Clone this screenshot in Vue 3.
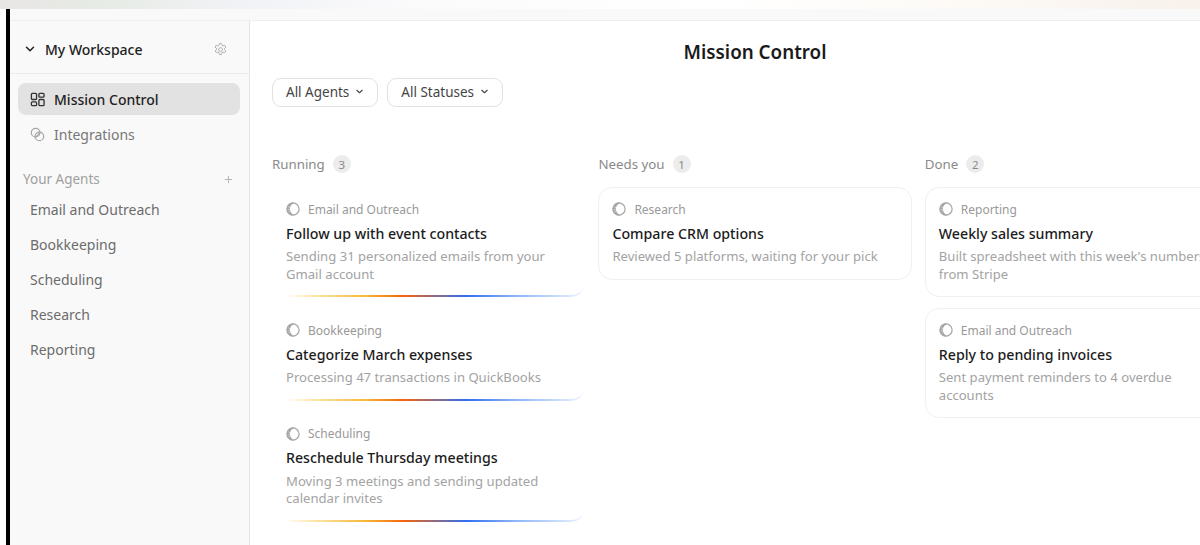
<script setup>
const agents = ['Email and Outreach', 'Bookkeeping', 'Scheduling', 'Research', 'Reporting']

const columns = [
  {
    name: 'Running',
    running: true,
    cards: [
      { agent: 'Email and Outreach', title: 'Follow up with event contacts', desc: 'Sending 31 personalized emails from your Gmail account' },
      { agent: 'Bookkeeping', title: 'Categorize March expenses', desc: 'Processing 47 transactions in QuickBooks' },
      { agent: 'Scheduling', title: 'Reschedule Thursday meetings', desc: 'Moving 3 meetings and sending updated calendar invites' },
    ],
  },
  {
    name: 'Needs you',
    running: false,
    cards: [
      { agent: 'Research', title: 'Compare CRM options', desc: 'Reviewed 5 platforms, waiting for your pick' },
    ],
  },
  {
    name: 'Done',
    running: false,
    cards: [
      { agent: 'Reporting', title: 'Weekly sales summary', desc: "Built spreadsheet with this week's numbers from Stripe" },
      { agent: 'Email and Outreach', title: 'Reply to pending invoices', desc: 'Sent payment reminders to 4 overdue accounts' },
    ],
  },
]
</script>

<template>
  <div class="page">
    <div class="top-strip"></div>
    <div class="window">
      <div class="titlebar"></div>
      <div class="app">
        <aside class="sidebar">
          <div class="workspace">
            <svg class="ws-chevron" viewBox="0 0 12 12" width="12" height="12">
              <path d="M2.5 4.2 6 7.8l3.5-3.6" fill="none" stroke="#222" stroke-width="1.5" stroke-linecap="round" stroke-linejoin="round" />
            </svg>
            <span class="ws-name">My Workspace</span>
            <svg class="ws-gear" viewBox="0 0 24 24" width="15" height="15" fill="none" stroke="#b0b0b0" stroke-width="1.6" stroke-linejoin="round">
              <path d="M10.3 2.5h3.4l.6 2.9 1.7.9 2.8-1 1.7 3-2.2 1.9v2l2.2 1.9-1.7 3-2.8-1-1.7.9-.6 2.9h-3.4l-.6-2.9-1.7-.9-2.8 1-1.7-3 2.2-1.9v-2L3.2 8.3l1.7-3 2.8 1 1.7-.9z" />
              <circle cx="12" cy="12" r="3" />
            </svg>
          </div>
          <nav class="nav">
            <div class="nav-item active">
              <svg viewBox="0 0 16 16" width="15" height="15" fill="none" stroke="#333" stroke-width="1.4">
                <rect x="1.5" y="1.5" width="5.5" height="6.5" rx="1" />
                <rect x="9.5" y="1.5" width="5.5" height="4" rx="1" />
                <rect x="1.5" y="10.5" width="5.5" height="4" rx="1" />
                <rect x="9.5" y="8" width="5.5" height="6.5" rx="1" />
              </svg>
              <span>Mission Control</span>
            </div>
            <div class="nav-item">
              <svg viewBox="0 0 16 16" width="15" height="15" fill="none" stroke="#a6a6a6" stroke-width="1.3">
                <circle cx="6" cy="6" r="4.6" />
                <circle cx="10" cy="10" r="4.6" />
                <path d="M6.5 10.5 10.5 6" />
              </svg>
              <span>Integrations</span>
            </div>
          </nav>
          <div class="agents-head">
            <span>Your Agents</span>
            <svg viewBox="0 0 10 10" width="9" height="9" stroke="#b5b5b5" stroke-width="1.1">
              <path d="M5 1v8M1 5h8" />
            </svg>
          </div>
          <div class="agent-row" v-for="a in agents" :key="a">{{ a }}</div>
        </aside>

        <main class="main">
          <h1 class="title">Mission Control</h1>
          <div class="filters">
            <button class="filter">
              All Agents
              <svg viewBox="0 0 10 10" width="9" height="9"><path d="M2 3.6 5 6.4l3-2.8" fill="none" stroke="#444" stroke-width="1.2" stroke-linecap="round" stroke-linejoin="round" /></svg>
            </button>
            <button class="filter">
              All Statuses
              <svg viewBox="0 0 10 10" width="9" height="9"><path d="M2 3.6 5 6.4l3-2.8" fill="none" stroke="#444" stroke-width="1.2" stroke-linecap="round" stroke-linejoin="round" /></svg>
            </button>
          </div>
          <div class="board">
            <section class="column" v-for="col in columns" :key="col.name">
              <div class="col-head">
                <span>{{ col.name }}</span>
                <span class="count">{{ col.cards.length }}</span>
              </div>
              <div class="card-list">
                <article class="card" :class="{ running: col.running }" v-for="c in col.cards" :key="c.title">
                  <div class="meta">
                    <svg viewBox="0 0 14 14" width="14" height="14" fill="none">
                      <circle cx="7" cy="7" r="6.1" stroke="#ababab" stroke-width="1.3" />
                      <path d="M9 .9A6.4 6.4 0 1 0 9 13.1 6 6 0 0 1 3.9 7 6 6 0 0 1 9 .9Z" fill="#a6a6a6" />
                      <path d="M2.2 4.6 4 5.8M1.7 7.4h2.2M2.4 10l1.8-1.2" stroke="#dedede" stroke-width=".7" />
                    </svg>
                    <span>{{ c.agent }}</span>
                  </div>
                  <div class="card-title">{{ c.title }}</div>
                  <div class="card-desc">{{ c.desc }}</div>
                </article>
              </div>
            </section>
          </div>
        </main>
      </div>
    </div>
  </div>
</template>

<style scoped>
.page {
  width: 1200px;
  height: 545px;
  overflow: hidden;
  background: #fff;
  font-family: "Noto Sans", "Liberation Sans", sans-serif;
  display: flex;
  flex-direction: column;
}

.top-strip {
  height: 9px;
  flex: none;
  background: linear-gradient(90deg, #e9e5e6 0%, #e6ebe4 8%, #f1f2f6 20%, #fbfbfc 35%, #ffffff 60%, #fdfaf6 80%, #f8f1ec 100%);
}

.window {
  flex: 1;
  min-height: 0;
  margin-left: 6px;
  border-left: 4px solid #000;
  display: flex;
  flex-direction: column;
}

.titlebar {
  height: 11px;
  flex: none;
  background: #f9f9f9;
  border-bottom: 1px solid #eeeeee;
}

.app {
  flex: 1;
  min-height: 0;
  display: flex;
}

.sidebar {
  width: 240px;
  flex: none;
  box-sizing: border-box;
  background: #f9f9f9;
  border-right: 1px solid #e6e6e6;
}

.workspace {
  height: 53px;
  box-sizing: border-box;
  border-bottom: 1px solid #ececec;
  display: flex;
  align-items: center;
  padding: 4px 21px 0 14px;
  font-size: 14px;
  font-weight: 500;
  color: #222;
}

.ws-name {
  margin-left: 9px;
}

.ws-gear {
  margin-left: auto;
}

.nav {
  padding: 9px 9px 0 8px;
}

.nav-item {
  height: 32px;
  margin-bottom: 3px;
  border-radius: 8px;
  display: flex;
  align-items: center;
  gap: 9px;
  padding-left: 12px;
  font-size: 14px;
  color: #777;
}

.nav-item.active {
  background: #e2e2e2;
  color: #222;
  font-weight: 500;
}

.agents-head {
  display: flex;
  align-items: center;
  justify-content: space-between;
  padding: 16px 16px 0 13px;
  margin-bottom: 3px;
  height: 20px;
  font-size: 13.5px;
  color: #a0a0a0;
}

.agent-row {
  height: 35px;
  display: flex;
  align-items: center;
  padding-left: 20px;
  font-size: 14px;
  color: #6c6c6c;
}

.main {
  width: 1010px;
  flex: none;
}

.title {
  margin: 0;
  padding-top: 18px;
  height: 27px;
  line-height: 27px;
  text-align: center;
  font-size: 18.8px;
  font-weight: 600;
  color: #1a1a1a;
}

.filters {
  display: flex;
  gap: 9px;
  margin-top: 12px;
  padding-left: 22px;
}

.filter {
  height: 29px;
  box-sizing: border-box;
  display: flex;
  align-items: center;
  gap: 6px;
  padding: 0 13px 2px;
  background: #fff;
  border: 1px solid #e2e2e2;
  border-radius: 9px;
  font-family: inherit;
  font-size: 13.5px;
  color: #444;
}

.board {
  display: flex;
  gap: 13px;
  margin-top: 48px;
  padding-left: 22px;
}

.column {
  width: 313.4px;
  flex: none;
}

.col-head {
  display: flex;
  align-items: center;
  gap: 8px;
  height: 18px;
  margin-bottom: 14px;
  font-size: 13.3px;
  color: #8a8a8a;
}

.count {
  width: 18px;
  height: 18px;
  border-radius: 50%;
  background: #ececec;
  font-size: 11.5px;
  color: #888;
  display: flex;
  align-items: center;
  justify-content: center;
}

.card-list {
  display: flex;
  flex-direction: column;
  gap: 11px;
}

.card {
  position: relative;
  box-sizing: border-box;
  padding: 12px 13px 13px;
  background: #fff;
  border: 1px solid #f0f0f0;
  border-radius: 14px;
}

.card.running {
  border-color: transparent;
}

/* coloured trace along the bottom edge of a running card */
.card.running::after {
  content: "";
  position: absolute;
  inset: -1px;
  border-radius: 14px;
  border-bottom: 2px solid transparent;
  background: linear-gradient(90deg, rgba(255, 225, 140, 0) 4%, #fbe5a4 14%, #f5b838 30%, #f4640f 42%, #2f6ff0 62%, #8fb6f8 78%, #dce9fd 96%, #eef4fe 100%) border-box;
  -webkit-mask: linear-gradient(#000 0 0) padding-box, linear-gradient(#000 0 0) border-box;
  -webkit-mask-composite: xor;
  mask: linear-gradient(#000 0 0) padding-box, linear-gradient(#000 0 0) border-box;
  mask-composite: exclude;
}

.meta {
  display: flex;
  align-items: center;
  gap: 8px;
  height: 18px;
  font-size: 12px;
  color: #999;
}

.card-title {
  margin-top: 4.5px;
  line-height: 22px;
  font-size: 14.2px;
  font-weight: 500;
  color: #1c1c1c;
  white-space: nowrap;
}

.card-desc {
  margin-top: 3.5px;
  line-height: 17.6px;
  font-size: 13.1px;
  color: #a3a3a3;
}
</style>

<style>
html, body {
  margin: 0;
  overflow: hidden;
}
</style>
